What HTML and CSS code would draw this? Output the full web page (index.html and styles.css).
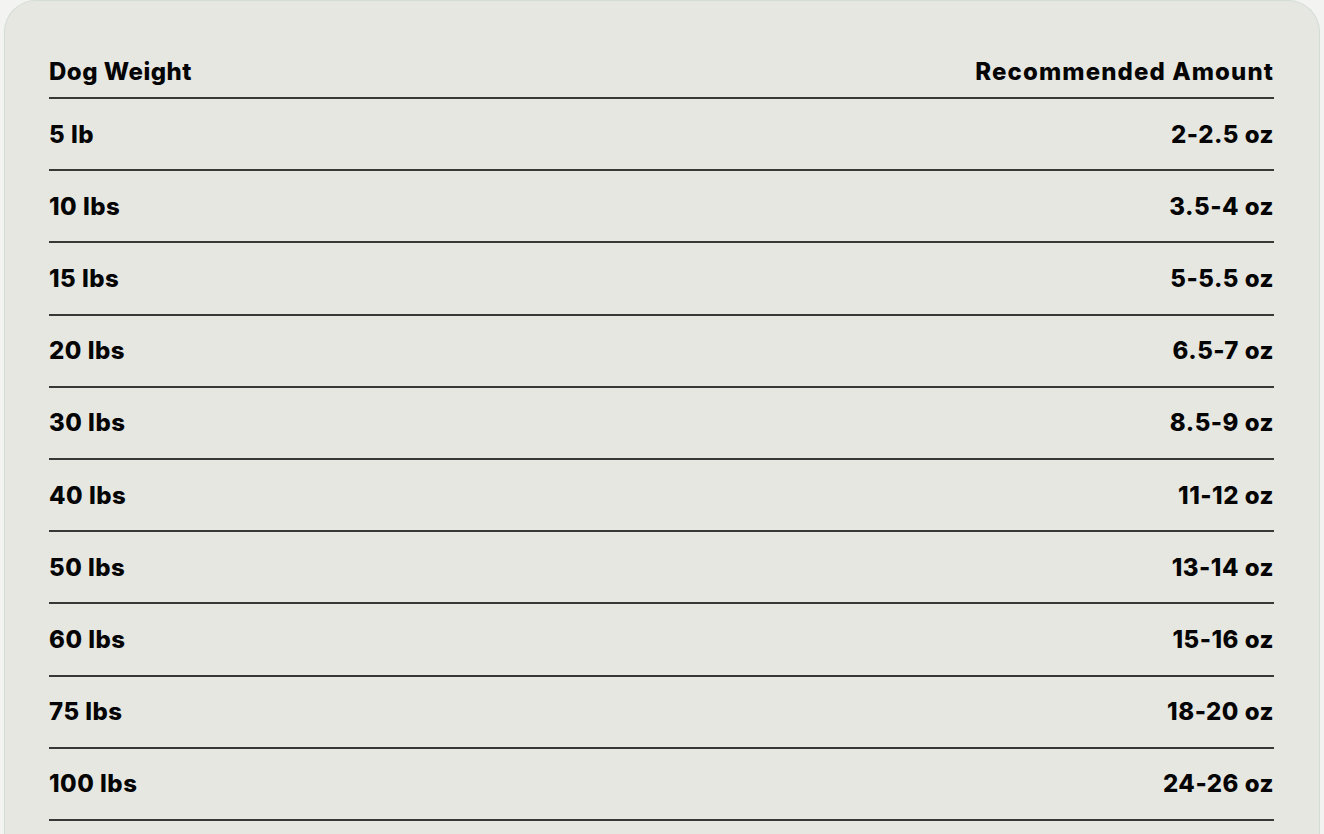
FILE: index.html
```html
<!DOCTYPE html>
<html lang="en">
<head>
<meta charset="utf-8">
<title>Feeding Guide</title>
<link rel="stylesheet" href="styles.css">
</head>
<body>
<div class="card">
  <table class="feed">
    <thead>
      <tr><th class="left">Dog Weight</th><th class="right wide">Recommended Amount</th></tr>
    </thead>
    <tbody>
      <tr><td class="left">5 lb</td><td class="right">2-2.5 oz</td></tr>
      <tr><td class="left">10 lbs</td><td class="right">3.5-4 oz</td></tr>
      <tr><td class="left">15 lbs</td><td class="right">5-5.5 oz</td></tr>
      <tr><td class="left">20 lbs</td><td class="right">6.5-7 oz</td></tr>
      <tr><td class="left">30 lbs</td><td class="right">8.5-9 oz</td></tr>
      <tr><td class="left">40 lbs</td><td class="right">11-12 oz</td></tr>
      <tr><td class="left">50 lbs</td><td class="right">13-14 oz</td></tr>
      <tr><td class="left">60 lbs</td><td class="right">15-16 oz</td></tr>
      <tr><td class="left">75 lbs</td><td class="right">18-20 oz</td></tr>
      <tr><td class="left">100 lbs</td><td class="right">24-26 oz</td></tr>
    </tbody>
  </table>
</div>
</body>
</html>
```
FILE: styles.css
```css
html, body {
  margin: 0;
  padding: 0;
  background: #f3f3f1;
}
body {
  font-family: Inter, "Liberation Sans", sans-serif;
  color: #050505;
}
.card {
  margin: 0 4px;
  background: #e7e7e2;
  border: 1px solid #d3dcd5;
  border-bottom: none;
  border-radius: 32px 32px 0 0;
  padding: 0 45px 40px 44px;
  min-height: 900px;
  box-sizing: border-box;
}
.feed {
  width: 100%;
  border-collapse: collapse;
}
.feed th, .feed td {
  font-size: 24px;
  font-weight: 800;
  letter-spacing: 0.5px;
  padding: 0;
  border-bottom: 2px solid #383838;
}
.feed th {
  height: 97px;
  padding-top: 45px;
  box-sizing: border-box;
}
.feed th.wide {
  letter-spacing: 1.1px;
}
.feed td {
  height: 72.2px;
  box-sizing: border-box;
  vertical-align: middle;
}
.left { text-align: left; }
.right { text-align: right; }
```
